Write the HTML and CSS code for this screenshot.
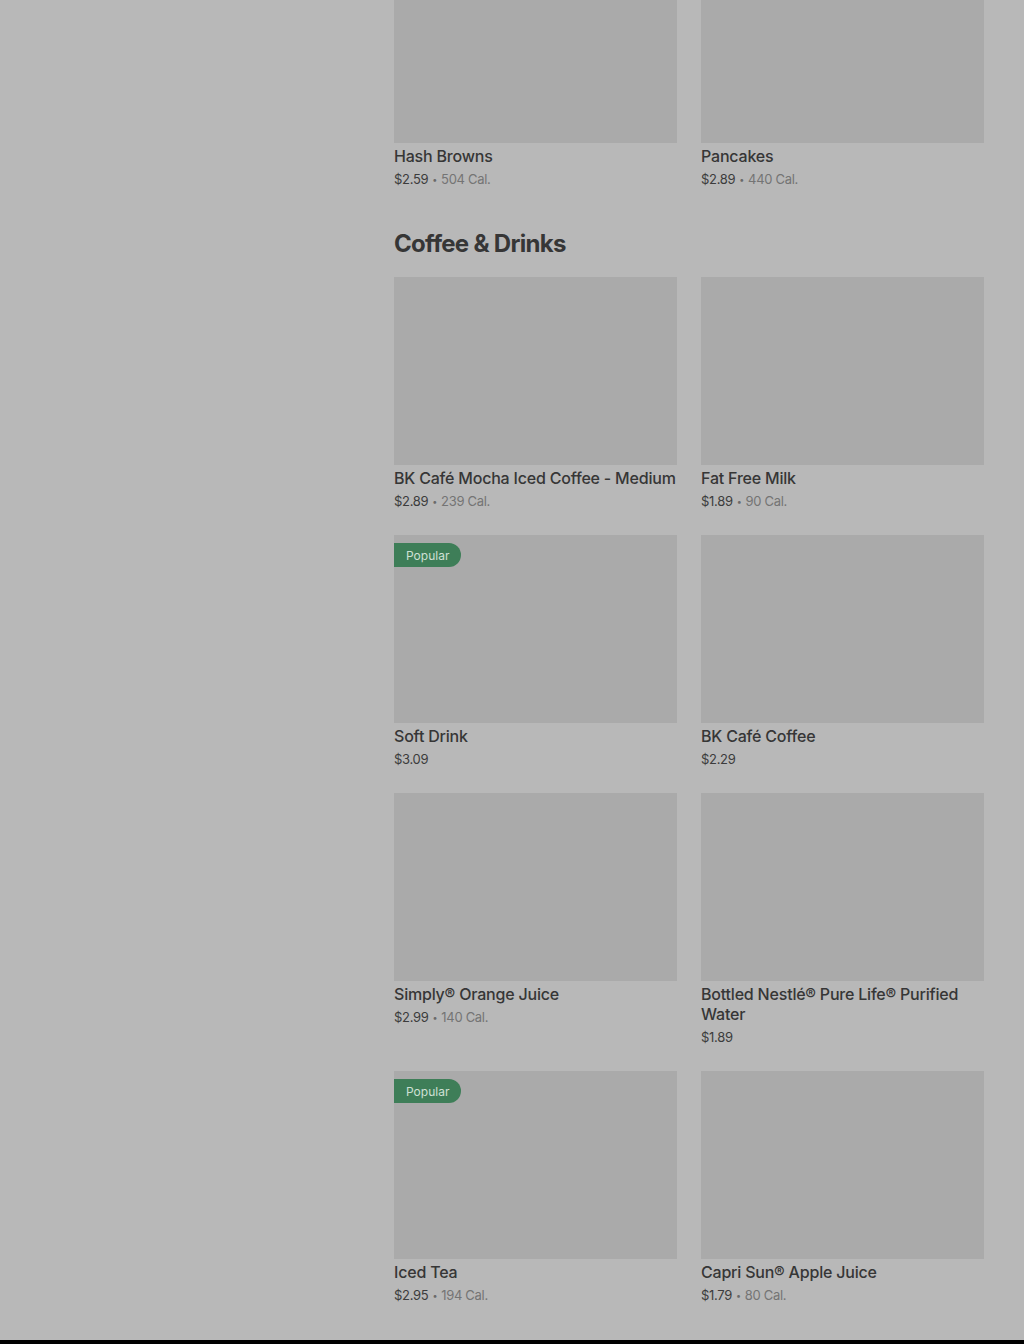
FILE: index.html
```html
<!DOCTYPE html>
<html lang="en">
<head>
  <meta charset="UTF-8" />
  <meta name="viewport" content="width=device-width, initial-scale=1" />
  <title>Menu</title>
  <link rel="stylesheet" href="styles.css">
</head>
<body>
  <div class="page">
    <aside class="sidebar"></aside>

    <main class="menu">
      <section class="category category-top">
        <div class="items">
          <div class="item">
            <div class="thumb"></div>
            <div class="name">Hash Browns</div>
            <div class="meta"><span class="price">$2.59</span><span class="dot">•</span><span class="cal">504 Cal.</span></div>
          </div>
          <div class="item">
            <div class="thumb"></div>
            <div class="name">Pancakes</div>
            <div class="meta"><span class="price">$2.89</span><span class="dot">•</span><span class="cal">440 Cal.</span></div>
          </div>
        </div>
      </section>

      <section class="category">
        <h2>Coffee &amp; Drinks</h2>
        <div class="items">
          <div class="item">
            <div class="thumb"></div>
            <div class="name">BK Café Mocha Iced Coffee - Medium</div>
            <div class="meta"><span class="price">$2.89</span><span class="dot">•</span><span class="cal">239 Cal.</span></div>
          </div>
          <div class="item">
            <div class="thumb"></div>
            <div class="name">Fat Free Milk</div>
            <div class="meta"><span class="price">$1.89</span><span class="dot">•</span><span class="cal">90 Cal.</span></div>
          </div>
          <div class="item">
            <div class="thumb"><span class="badge">Popular</span></div>
            <div class="name">Soft Drink</div>
            <div class="meta"><span class="price">$3.09</span></div>
          </div>
          <div class="item">
            <div class="thumb"></div>
            <div class="name">BK Café Coffee</div>
            <div class="meta"><span class="price">$2.29</span></div>
          </div>
          <div class="item">
            <div class="thumb"></div>
            <div class="name">Simply® Orange Juice</div>
            <div class="meta"><span class="price">$2.99</span><span class="dot">•</span><span class="cal">140 Cal.</span></div>
          </div>
          <div class="item">
            <div class="thumb"></div>
            <div class="name">Bottled Nestlé® Pure Life® Purified Water</div>
            <div class="meta"><span class="price">$1.89</span></div>
          </div>
          <div class="item">
            <div class="thumb"><span class="badge">Popular</span></div>
            <div class="name">Iced Tea</div>
            <div class="meta"><span class="price">$2.95</span><span class="dot">•</span><span class="cal">194 Cal.</span></div>
          </div>
          <div class="item">
            <div class="thumb"></div>
            <div class="name">Capri Sun® Apple Juice</div>
            <div class="meta"><span class="price">$1.79</span><span class="dot">•</span><span class="cal">80 Cal.</span></div>
          </div>
        </div>
      </section>
    </main>
  </div>

  <footer class="site-footer"></footer>
</body>
</html>
```

FILE: styles.css
```css
body {
  margin: 0;
  background-color: #b8b8b8;
  font-family: Inter, 'Noto Sans', sans-serif;
  color: #343434;
}

.page {
  display: flex;
  padding-right: 40px;
  padding-bottom: 35px;
}

.sidebar {
  width: 394px;
  flex-shrink: 0;
}

.menu {
  flex: 1;
}

/* first section is scrolled partly out of view */
.category-top {
  margin-top: -45px;
}

.category h2 {
  margin: 39px 0 17px;
  font-size: 24px;
  line-height: 32px;
  font-weight: 700;
  letter-spacing: -0.7px;
  color: #363636;
}

.items {
  display: grid;
  grid-template-columns: 1fr 1fr;
  column-gap: 24px;
  row-gap: 24px;
}

.thumb {
  position: relative;
  height: 188px;
  background-color: #aaaaaa;
}

.badge {
  position: absolute;
  top: 8px;
  left: 0;
  height: 24px;
  padding: 0 12px;
  display: flex;
  align-items: center;
  background-color: #3e7e58;
  color: #cfe0d5;
  font-size: 12px;
  border-radius: 0 12px 12px 0;
}

.name {
  margin-top: 3px;
  font-size: 16px;
  line-height: 20px;
  font-weight: 500;
  letter-spacing: -0.2px;
  color: #363636;
}

.meta {
  margin-top: 3px;
  height: 20px;
  display: flex;
  align-items: center;
  font-size: 13px;
  line-height: 20px;
  letter-spacing: -0.3px;
}

.meta .price {
  color: #3c3c3c;
}

.meta .dot {
  margin: 0 4px;
  font-size: 9px;
  line-height: 1;
  color: #6a6a6a;
}

.meta .cal {
  color: #747474;
}

.site-footer {
  height: 100px;
  background-color: #000;
}
```
